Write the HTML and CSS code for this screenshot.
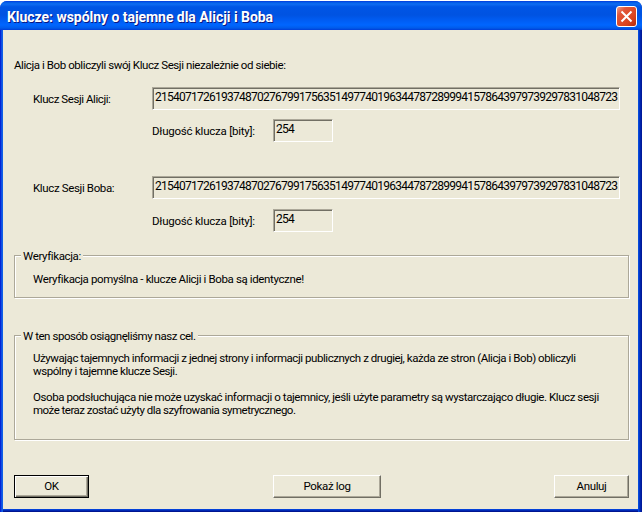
FILE: index.html
```html
<!DOCTYPE html>
<html lang="pl">
<head>
<meta charset="utf-8">
<title>Klucze</title>
<link rel="stylesheet" href="styles.css">
</head>
<body>
<div class="window">
  <header class="titlebar">
    <h1 class="title">Klucze: wspólny o tajemne dla Alicji i Boba</h1>
    <button class="close" aria-label="Zamknij"><svg width="21" height="21" viewBox="0 0 21 21"><path d="M5.5 5.5 15.5 15.5M15.5 5.5 5.5 15.5" fill="none" stroke="#fff" stroke-width="2"/></svg></button>
  </header>
  <main class="content">
    <p class="intro"><span class="t-intro">Alicja i Bob obliczyli swój Klucz Sesji niezależnie od siebie:</span></p>
    <section class="party">
      <span class="name"><span class="t-alice">Klucz Sesji Alicji:</span></span>
      <output class="field key">21540717261937487027679917563514977401963447872899941578643979739297831048723</output>
      <div class="length"><span class="t-len">Długość klucza [bity]:</span><output class="field bits">254</output></div>
    </section>
    <section class="party second">
      <span class="name"><span class="t-bob">Klucz Sesji Boba:</span></span>
      <output class="field key">21540717261937487027679917563514977401963447872899941578643979739297831048723</output>
      <div class="length"><span class="t-len">Długość klucza [bity]:</span><output class="field bits">254</output></div>
    </section>
    <fieldset class="group verify">
      <legend><span class="t-ver">Weryfikacja:</span></legend>
      <p><span class="t-ok">Weryfikacja pomyślna - klucze Alicji i Boba są identyczne!</span></p>
    </fieldset>
    <fieldset class="group goal">
      <legend><span class="t-goal">W ten sposób osiągnęliśmy nasz cel.</span></legend>
      <p><span class="t-g1">Używając tajemnych informacji z jednej strony i informacji publicznych z drugiej, każda ze stron (Alicja i Bob) obliczyli</span><br><span class="t-g2">wspólny i tajemne klucze Sesji.</span></p>
      <p><span class="t-g3">Osoba podsłuchująca nie może uzyskać informacji o tajemnicy, jeśli użyte parametry są wystarczająco długie. Klucz sesji</span><br><span class="t-g4">może teraz zostać użyty dla szyfrowania symetrycznego.</span></p>
    </fieldset>
    <footer class="actions">
      <button class="btn default">OK</button>
      <button class="btn log">Pokaż log</button>
      <button class="btn">Anuluj</button>
    </footer>
  </main>
</div>
</body>
</html>
```
FILE: styles.css
```css
* { box-sizing: border-box; }
body { margin: 0; background: #fff; overflow: hidden; }
.window {
  width: 642px; height: 511px; margin-top: 1px; padding: 0 4px 3px 3px;
  border-radius: 7px 7px 0 0; overflow: hidden;
  background: linear-gradient(90deg, #0019cf 0, #0831d9 1px, #166aee 2px, #0855dd 3px, #0855dd 638px, #0441d8 639px, #0029b5 640px, #001590 642px);
  color: #000; font: 11.5px/13px Roboto, sans-serif;
  display: flex; flex-direction: column;
}
.titlebar {
  height: 29px; margin: 0 -4px 0 -3px; padding: 0 5px 0 7px;
  display: flex; align-items: center; justify-content: space-between; flex: none;
  background: linear-gradient(#0831d9 0, #0058e6 1px, #0f6cf0 3px, #0055e5 6px, #0053e1 14px, #005cf2 19px, #0066ff 24px, #005bea 27px, #003dd7 29px);
}
.title { margin: 3px 0 0; font: bold 14px/18px Roboto, sans-serif; letter-spacing: -.04px; color: #fff; text-shadow: 1px 1px #0a1883; white-space: nowrap; }
.close { width: 21px; height: 21px; margin-top: 2px; padding: 0; border: 1px solid #fff; border-radius: 3px; background: linear-gradient(135deg, #f0a08a, #e2573a 25%, #d9431e 70%, #b52b08); }
.close svg { display: block; margin: -1px; }
.content { flex: 1; padding: 29px 8px 0 11px; background: #ece9d8; box-shadow: 0 1px #0441d8, 0 2px #0029b5, 0 3px #001590; white-space: nowrap; }
p { margin: 0; }
.intro { height: 28px; }
.party { display: grid; grid-template-columns: 138px 468px; height: 89px; grid-template-rows: 23px 23px; row-gap: 9px; }
.second { height: 73px; grid-template-rows: 23px 23px; row-gap: 10px; }
.name { padding: 6px 0 0 19px; }
.field { display: block; height: 23px; padding: 3px 1px 3px 2px; border: 1px solid; border-color: #aca899 #fff #fff #aca899; box-shadow: inset 1px 1px #716f64; overflow: hidden; font-size: 12px; letter-spacing: -.74px; }
.length { grid-column: 2; display: flex; }
.length > span { width: 121px; padding-top: 6px; }
.bits { width: 60px; }
.group { margin: 0; min-width: 0; width: 615px; padding: 0 0 0 18px; border: 1px solid #aca899; box-shadow: 1px 1px #fff, inset 1px 1px #fff; }
legend { height: 13px; margin-left: -12px; padding: 1px 2px 0 2px; background: #ece9d8; }
.verify { height: 49px; }
.verify p { padding-top: 11px; }
.goal { height: 111px; margin-top: 31px; }
.goal p { padding-top: 10px; }
.goal p + p { padding-top: 13px; }
.actions { display: flex; justify-content: space-between; width: 615px; margin-top: 35px; }
.btn { width: 75px; height: 23px; padding: 0; border: 1px solid; border-color: #fff #716f64 #716f64 #fff; box-shadow: inset -1px -1px #aca899; background: #ece9d8; font: inherit; letter-spacing: -.35px; }
.default { border-color: #000; box-shadow: inset 1px 1px #fff, inset -1px -1px #716f64, inset -2px -2px #aca899; }
.log { width: 108px; margin-left: 33px; margin-right: 22px; }

.t-intro { letter-spacing: -.42px; }
.t-alice { letter-spacing: -.43px; }
.t-bob { letter-spacing: -.36px; }
.t-len { letter-spacing: -.23px; }
.t-ver, .t-ok { letter-spacing: -.37px; }
.t-goal { letter-spacing: -.45px; }
.t-g1 { letter-spacing: -.445px; }
.t-g2 { letter-spacing: -.44px; }
.t-g3 { letter-spacing: -.425px; }
.t-g4 { letter-spacing: -.51px; }
```
